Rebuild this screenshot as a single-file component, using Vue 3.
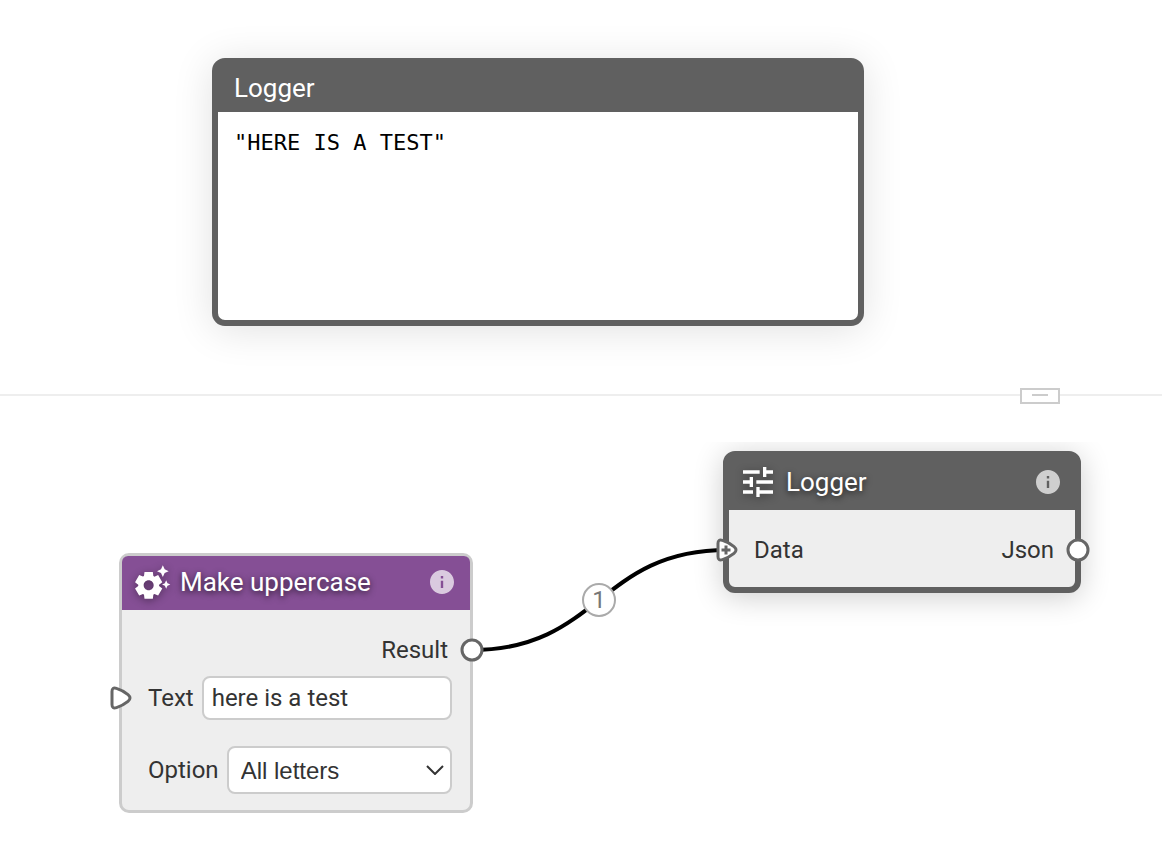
<script setup>
import { ref } from 'vue'

const text = ref('here is a test')
const option = ref('All letters')
const options = ['All letters', 'First letter']
const output = '"HERE IS A TEST"'
const infoPath =
  'M12 2C6.48 2 2 6.48 2 12s4.480 10 10 10 10-4.480 10-10S17.520 2 12 2zm1 15h-2v-6h2v6zm0-8h-2V7h2v2z'
const inputPort =
  'M3 5.500Q3 0.800 7.500 2.400Q14 4.500 19 8.600Q23 12 19 15.400Q14 19.500 7.500 21.600Q3 23.200 3 18.500Z'
</script>

<template>
  <main class="workspace">
    <section class="preview">
      <article class="panel">
        <h2 class="panel-title">Logger</h2>
        <pre class="panel-output">{{ output }}</pre>
      </article>
    </section>

    <section class="canvas">
      <button class="handle" type="button" aria-label="Resize preview"><span></span></button>

      <article class="node logger">
        <header class="node-header">
          <svg class="node-icon" viewBox="0 0 24 24" aria-hidden="true">
            <path d="M3 17v2h6v-2H3zM3 5v2h10V5H3zm10 16v-2h8v-2h-8v-2h-2v6h2zM7 9v2H3v2h4v2h2V9H7zm14 4v-2H11v2h10zm-6-4h2V7h4V5h-4V3h-2v6z" />
          </svg>
          <h3>Logger</h3>
          <button class="info" type="button" aria-label="About Logger">
            <svg viewBox="2 2 20 20"><path :d="infoPath" /></svg>
          </button>
        </header>
        <div class="node-body">
          <div class="row ports">
            <span>Data</span>
            <span>Json</span>
          </div>
        </div>
      </article>

      <article class="node uppercase">
        <header class="node-header">
          <svg class="node-icon" viewBox="0 0 24 24" aria-hidden="true">
            <path d="M17.410 6.590 15 5.500l2.410-1.090L18.500 2l1.090 2.410L22 5.500l-2.410 1.090L18.500 9l-1.090-2.410zM21.280 12.720 20.500 11l-.78 1.720-1.720.78 1.720.78.78 1.720.78-1.720L23 13.500l-1.720-.78zM16.240 14.370l1.940 1.470-2.500 4.330-2.240-.94c-.2.13-.42.26-.64.37l-.3 2.400h-5l-.3-2.410c-.22-.11-.43-.23-.64-.37l-2.240.94-2.500-4.330 1.940-1.470c-.01-.11-.01-.24-.01-.36s0-.25.01-.37l-1.940-1.470 2.500-4.330 2.240.94c.2-.13.42-.26.64-.37L7.500 6h5l.3 2.410c.22.11.43.23.64.37l2.240-.94 2.500 4.330-1.940 1.470c.01.12.01.24.01.37s0 .24-.01.36zM13 14c0-1.660-1.340-3-3-3s-3 1.340-3 3 1.340 3 3 3 3-1.340 3-3z" />
          </svg>
          <h3>Make uppercase</h3>
          <button class="info" type="button" aria-label="About Make uppercase">
            <svg viewBox="2 2 20 20"><path :d="infoPath" /></svg>
          </button>
        </header>
        <div class="node-body">
          <div class="row result"><span>Result</span></div>
          <div class="row text-row">
            <label for="text">Text</label>
            <input id="text" v-model="text" type="text" />
          </div>
          <div class="row option-row">
            <label for="option">Option</label>
            <div class="select">
              <select id="option" v-model="option">
                <option v-for="o in options" :key="o">{{ o }}</option>
              </select>
              <svg class="chevron" viewBox="0 0 18 10" aria-hidden="true"><path d="M1 1l8 8 8-8" /></svg>
            </div>
          </div>
        </div>
      </article>

      <svg class="wire" viewBox="0 0 256 104" aria-hidden="true">
        <path d="M0 102C127 102 127 2 255 2" />
      </svg>
      <span class="wire-label">1</span>

      <svg class="port json-port" viewBox="0 0 24 24"><circle cx="12" cy="12" r="10" /></svg>
      <svg class="port result-port" viewBox="0 0 24 24"><circle cx="12" cy="12" r="10" /></svg>
      <svg class="port text-port" viewBox="0 0 24 24"><path :d="inputPort" /></svg>
      <svg class="port data-port" viewBox="0 0 24 24">
        <path :d="inputPort" />
        <path d="M11 7.500v9M6.500 12h9" />
      </svg>
    </section>
  </main>
</template>

<style>
body {
  margin: 0;
  background: #fff;
}
</style>

<style scoped>
.workspace {
  display: flex;
  flex-direction: column;
  min-height: 100vh;
  font-family: Roboto, sans-serif;
  font-size: 24px;
  color: #333;
}
.workspace * {
  box-sizing: border-box;
}
.preview {
  padding: 58px 298px 68px 212px;
  border-bottom: 2px solid #eee;
}
.panel {
  min-height: 268px;
  border: 6px solid #606060;
  border-radius: 13px;
  background: #fff;
  box-shadow: 0 4px 40px rgba(0, 0, 0, 0.12);
}
.panel-title {
  margin: 0;
  padding: 0 16px;
  background: #606060;
  color: #fff;
  font: 400 26px/48px Roboto, sans-serif;
}
.panel-output {
  margin: 0;
  padding: 16px;
  color: #000;
  font: 22px/30px "DejaVu Sans Mono", monospace;
}
.canvas {
  position: relative;
  flex: 1;
  min-height: 468px;
}
.handle {
  position: absolute;
  top: -8px;
  right: 102px;
  display: flex;
  align-items: center;
  justify-content: center;
  width: 40px;
  height: 16px;
  padding: 0 0 2px;
  border: 2px solid #ccc;
  background: #fff;
}
.handle span {
  width: 16px;
  height: 2px;
  background: #ccc;
}
.node {
  position: absolute;
  background: #eee;
}
.node-header {
  display: flex;
  align-items: center;
  color: #fff;
}
.node-header h3 {
  flex: 1;
  margin: 0 0 0 8px;
  font-size: 26px;
  font-weight: 400;
  line-height: 32px;
  text-shadow: 0 2px 6px rgba(0, 0, 0, 0.7);
}
.node-icon {
  width: 40px;
  height: 40px;
  fill: #fff;
  filter: drop-shadow(0 2px 4px rgba(0, 0, 0, 0.4));
}
.info {
  display: flex;
  padding: 0;
  border: 0;
  background: none;
}
.info svg {
  width: 24px;
  height: 24px;
  fill: #fff;
  opacity: 0.7;
}
.row {
  display: flex;
  align-items: center;
}
.logger {
  top: 55px;
  left: 723px;
  width: 358px;
  border: 6px solid #606060;
  border-radius: 12px;
  box-shadow: 0 4px 30px rgba(0, 0, 0, 0.2);
  clip-path: inset(-9px -50px -50px -50px);
}
.logger .node-header {
  height: 53px;
  padding: 0 15px 3px 9px;
  background: #606060;
}
.logger .node-body {
  padding: 22px 21px 19px 25px;
}
.ports {
  justify-content: space-between;
  height: 36px;
}
.uppercase {
  top: 157px;
  left: 119px;
  width: 354px;
  border: 3px solid #ccc;
  border-radius: 10px;
}
.uppercase .node-header {
  height: 54px;
  padding: 0 16px 2px 10px;
  border-radius: 6px 6px 0 0;
  background: #854f95;
}
.uppercase .node-body {
  padding: 22px 18px 16px 26px;
}
.result {
  justify-content: flex-end;
  height: 36px;
  padding-right: 4px;
}
.text-row {
  gap: 8px;
  margin: 8px 0 26px;
}
.option-row {
  gap: 8px;
}
input,
select {
  width: 100%;
  min-width: 0;
  border: 2px solid #ccc;
  border-radius: 8px;
  background: #fff;
  color: #333;
}
input {
  flex: 1;
  height: 44px;
  padding: 0 8px;
  font: 24px Roboto, sans-serif;
}
.select {
  position: relative;
  flex: 1;
}
select {
  display: block;
  appearance: none;
  height: 48px;
  padding: 0 36px 0 12px;
  font: 24px "Liberation Sans", sans-serif;
}
.chevron {
  position: absolute;
  top: 19px;
  right: 8px;
  width: 18px;
  height: 10px;
  fill: none;
  stroke: #333;
  stroke-width: 2;
  pointer-events: none;
}
.wire {
  position: absolute;
  top: 152px;
  left: 472px;
  width: 256px;
  height: 104px;
  fill: none;
  stroke: #000;
  stroke-width: 4;
}
.wire-label {
  position: absolute;
  top: 187px;
  left: 582px;
  width: 34px;
  height: 34px;
  border: 2px solid #aaa;
  border-radius: 50%;
  background: #fff;
  color: #777;
  line-height: 30px;
  text-align: center;
}
.port {
  position: absolute;
  width: 24px;
  height: 24px;
  fill: #fff;
  stroke: #666;
  stroke-width: 3;
}
.json-port {
  top: 142px;
  left: 1066px;
}
.result-port {
  top: 242px;
  left: 460px;
}
.text-port {
  top: 290px;
  left: 109px;
}
.data-port {
  top: 142px;
  left: 715px;
}
</style>
